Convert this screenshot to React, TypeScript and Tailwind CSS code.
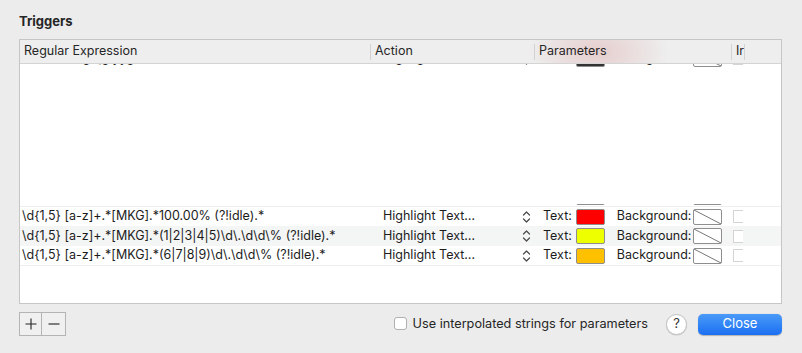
import React from 'react';

type Trigger = {
  regex: string;
  action: string;
  text: string;
};

const triggers: Trigger[] = [
  { regex: '\\d{1,5} [a-z]+.*[MKG].*100.00% (?!idle).*', action: 'Highlight Text…', text: 'bg-[#ff0000]' },
  { regex: '\\d{1,5} [a-z]+.*[MKG].*(1|2|3|4|5)\\d\\.\\d\\d\\% (?!idle).*', action: 'Highlight Text…', text: 'bg-[#eeff00]' },
  { regex: '\\d{1,5} [a-z]+.*[MKG].*(6|7|8|9)\\d\\.\\d\\d\\% (?!idle).*', action: 'Highlight Text…', text: 'bg-[#ffc000]' },
];

function UpDown() {
  return (
    <svg width="9" height="14" viewBox="0 0 9 14" fill="none" stroke="#4a4a4a" strokeWidth="1.2" strokeLinecap="round" strokeLinejoin="round">
      <path d="M1.5 5 L4.5 2 L7.5 5" />
      <path d="M1.5 9 L4.5 12 L7.5 9" />
    </svg>
  );
}

function NoColor() {
  return (
    <div className="relative h-[16px] w-[29px] rounded-[2px] border border-[#8e8e8e] bg-white">
      <svg className="absolute inset-0" width="27" height="14" viewBox="0 0 27 14">
        <line x1="0" y1="0" x2="27" y2="14" stroke="#555" strokeWidth="0.8" />
      </svg>
    </div>
  );
}

function Row({ t, shaded, height = 'h-[19px]' }: { t: Trigger; shaded?: boolean; height?: string }) {
  return (
    <div className={`flex shrink-0 items-center text-[12.5px] text-[#1c1c1c] ${height} ${shaded ? 'bg-[#f4f5f5]' : 'bg-white'}`}>
      <div className="w-[351px] truncate pl-[2px]">{t.regex}</div>
      <div className="flex w-[164px] items-center pl-[12px] pr-[4px]">
        <span>{t.action}</span>
        <span className="ml-auto"><UpDown /></span>
      </div>
      <div className="flex w-[196px] items-center pl-[8px]">
        <span>Text:</span>
        <div className={`ml-[4px] h-[16px] w-[29px] rounded-[2px] border border-[#8e8e8e] ${t.text}`} />
        <span className="ml-[12px]">Background:</span>
        <div className="ml-[2px]"><NoColor /></div>
      </div>
      <div className="pl-[2px]">
        <div className="h-[13px] w-[10px] border-y border-l border-[#d4d4d4] bg-white" />
      </div>
    </div>
  );
}

// bottom few pixels of a row that is scrolled mostly out of view
function Slice({ t, px }: { t: Trigger; px: string }) {
  return (
    <div className={`flex shrink-0 flex-col justify-end overflow-hidden ${px}`}>
      <Row t={t} />
    </div>
  );
}

function HeaderCell({ label, width }: { label: string; width: string }) {
  return (
    <div className={`flex items-center ${width}`}>
      <span className="pl-[4px]">{label}</span>
    </div>
  );
}

function Divider() {
  return <div className="h-[16px] w-px bg-[#d2d2d2]" />;
}

export default function App() {
  return (
    <div
      className="flex h-[353px] w-[802px] flex-col bg-[#ececec] pl-[19px] pr-[20px] pt-[13px]"
      style={{ fontFamily: 'Inter, "Liberation Sans", sans-serif' }}
    >
      <h1 className="text-[13px] font-bold leading-[16px] text-[#262626]">Triggers</h1>

      <div className="mt-[10px] flex h-[265px] flex-col border border-[#c6c6c6] bg-white">
        {/* column headers */}
        <div className="flex h-[24px] shrink-0 items-center border-b border-[#d4d4d4] bg-[#eeeeee] bg-[radial-gradient(ellipse_70px_40px_at_578px_12px,#e6cdcd,transparent)] text-[12.5px] text-[#262626]">
          <HeaderCell label="Regular Expression" width="w-[350px]" />
          <Divider />
          <HeaderCell label="Action" width="w-[163px]" />
          <Divider />
          <HeaderCell label="Parameters" width="w-[196px]" />
          <Divider />
          <div className="w-[12px] pl-[4px]">Ir</div>
          <Divider />
        </div>

        <div className="flex flex-1 flex-col">
          <Slice t={{ regex: 'Attributes g qg yyg', action: 'Highlight Text…', text: 'bg-[#333]' }} px="h-[4px]" />
          <div className="h-[136px] shrink-0" />
          <Slice t={{ regex: '', action: 'Highlight Text…', text: 'bg-white' }} px="h-[2px]" />
          <div className="h-px shrink-0 bg-[#eeeeee]" />
          <Row t={triggers[0]} />
          <Row t={triggers[1]} shaded height="h-[20px]" />
          <Row t={triggers[2]} />
          <div className="h-px shrink-0 bg-[#eeeeee]" />
        </div>
      </div>

      <div className="mt-[8px] flex items-center">
        <div className="flex border border-[#b4b4b4] bg-[#f0f0f0]">
          <button className="flex h-[22px] w-[22px] items-center justify-center border-r border-[#b4b4b4]">
            <svg width="12" height="12" viewBox="0 0 12 12" stroke="#222" strokeWidth="1.1">
              <path d="M6 0.5 V11.5 M0.5 6 H11.5" />
            </svg>
          </button>
          <button className="flex h-[22px] w-[23px] items-center justify-center">
            <svg width="12" height="12" viewBox="0 0 12 12" stroke="#222" strokeWidth="1.1">
              <path d="M0.5 6 H11.5" />
            </svg>
          </button>
        </div>

        <label className="ml-auto flex items-center text-[12.7px] text-[#262626]">
          <span className="h-[13px] w-[13px] rounded-[3px] border border-[#b0b0b0] bg-white" />
          <span className="ml-[6px]">Use interpolated strings for parameters</span>
        </label>

        <button className="ml-[18px] flex h-[21px] w-[21px] items-center justify-center rounded-full border border-[#c2c2c2] bg-white text-[13px] text-[#333] shadow-[0_0.5px_1px_rgba(0,0,0,0.15)]">
          ?
        </button>

        <button className="ml-[11px] h-[21px] w-[84px] rounded-[5px] bg-gradient-to-b from-[#4a9af8] to-[#1a6ff2] text-[13px] text-white shadow-[0_0.5px_1px_rgba(0,0,0,0.25)]">
          Close
        </button>
      </div>
    </div>
  );
}
